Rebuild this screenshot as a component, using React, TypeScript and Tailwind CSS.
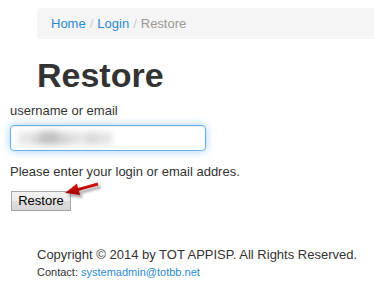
import React from "react";

export default function App() {
  return (
    <div className="w-[374px] h-[300px] overflow-hidden bg-white text-[#333] font-['Liberation_Sans',Arial,sans-serif]">
      <div className="flex flex-col">
        <nav className="mt-[8px] ml-[37px] h-[31px] flex items-center pl-[14px] bg-[#f5f5f5] rounded-l-[4px] text-[13px] leading-[19px]">
          <span className="text-[#2a8ad4]">Home</span>
          <span className="px-[4px] text-[#ccc]">/</span>
          <span className="text-[#2a8ad4]">Login</span>
          <span className="px-[4px] text-[#ccc]">/</span>
          <span className="text-[#999]">Restore</span>
        </nav>
        <h1 className="mt-[16px] ml-[37px] text-[34px] leading-[40px] font-bold text-[#333]">Restore</h1>
        <label className="mt-[6px] ml-[10px] text-[13px] leading-[19px]">username or email</label>
        <div className="mt-[5px] ml-[10px] w-[196px] h-[26px] rounded-[4px] border border-[#66afe9] bg-white shadow-[inset_0_1px_1px_rgba(0,0,0,0.075),0_0_8px_rgba(102,175,233,0.6)] flex items-center pl-[7px] overflow-hidden">
          <div className="flex items-center blur-[3px]">
            <div className="w-[14px] h-[13px] bg-[#e6e6e6]" />
            <div className="w-[8px] h-[13px] bg-[#d8d8d8]" />
            <div className="w-[18px] h-[14px] bg-[#c2c2c2]" />
            <div className="w-[10px] h-[13px] bg-[#d4d4d4]" />
            <div className="w-[10px] h-[13px] bg-[#e0e0e0]" />
            <div className="w-[8px] h-[13px] bg-[#e8e8e8]" />
            <div className="w-[12px] h-[13px] bg-[#dadada]" />
            <div className="w-[14px] h-[13px] bg-[#e4e4e4]" />
          </div>
        </div>
        <p className="mt-[11px] ml-[10px] text-[13px] leading-[19px]">Please enter your login or email addres.</p>
        <div className="relative mt-[7px] ml-[11px] h-[20px]">
          <button className="h-[20px] w-[60px] border border-[#a6a6a6] bg-[linear-gradient(#f3f3f3_0%,#ebebeb_50%,#dddddd_51%,#d6d6d6_100%)] text-[13px] leading-[18px] text-black font-['Liberation_Sans',Arial,sans-serif]">
            Restore
          </button>
          <svg className="absolute left-[49px] top-[-10px]" width="48" height="30" viewBox="0 0 48 30">
            <defs>
              <filter id="sh" x="-20%" y="-50%" width="140%" height="200%">
                <feGaussianBlur stdDeviation="1.2" />
              </filter>
              <linearGradient id="rg" x1="0" y1="0" x2="0" y2="1">
                <stop offset="0" stopColor="#e01010" />
                <stop offset="1" stopColor="#a00000" />
              </linearGradient>
            </defs>
            <g transform="translate(2.5,3)" fill="#777" opacity="0.6" filter="url(#sh)">
              <polygon points="5,15 16.9,5.5 18.1,9.9 37.6,4.6 38.4,7.4 18.9,12.7 20.1,17.1" />
            </g>
            <polygon points="5,15 16.9,5.5 18.1,9.9 37.6,4.6 38.4,7.4 18.9,12.7 20.1,17.1" fill="url(#rg)" />
          </svg>
        </div>
        <p className="mt-[37px] ml-[37px] text-[13px] leading-[19px]">Copyright © 2014 by TOT APPISP. All Rights Reserved.</p>
        <p className="ml-[37px] text-[11px] leading-[16px]">
          Contact: <span className="text-[#2a8ad4]">systemadmin@totbb.net</span>
        </p>
      </div>
    </div>
  );
}
